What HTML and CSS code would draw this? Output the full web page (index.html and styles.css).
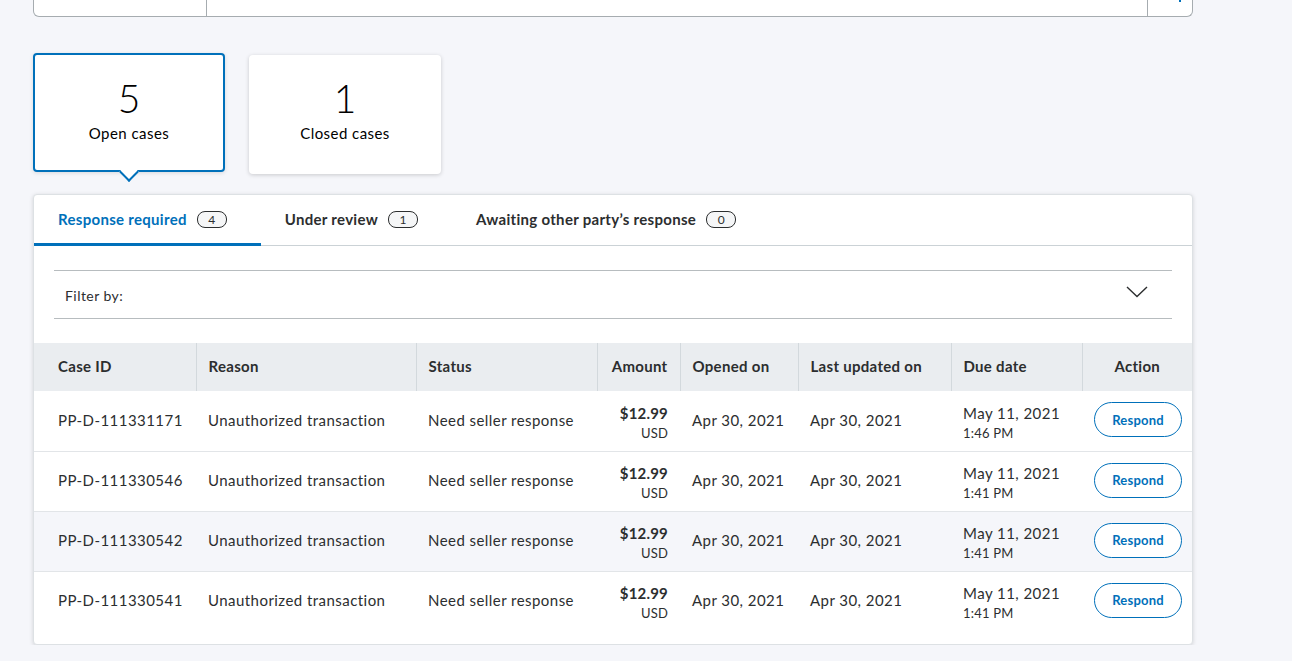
FILE: index.html
```html
<!DOCTYPE html>
<html>
<head>
<meta charset="utf-8">
<link rel="stylesheet" href="styles.css">
</head>
<body>
<div class="page">
  <div class="searchbar">
    <div class="sb-left"></div>
    <div class="sb-mid"></div>
    <div class="sb-right"><span class="sb-icon"></span></div>
  </div>

  <div class="cards">
    <div class="card active">
      <div class="card-num">5</div>
      <div class="card-label">Open cases</div>
      <span class="caret"></span>
    </div>
    <div class="card">
      <div class="card-num">1</div>
      <div class="card-label">Closed cases</div>
    </div>
  </div>

  <div class="panel">
    <div class="tabs">
      <div class="tab active">Response required <span class="badge">4</span></div>
      <div class="tab">Under review <span class="badge">1</span></div>
      <div class="tab">Awaiting other party’s response <span class="badge">0</span></div>
    </div>

    <div class="filter-wrap">
      <div class="filter">
        <span>Filter by:</span>
        <svg class="chev" width="22" height="12" viewBox="0 0 22 12"><path d="M1 1 L11 10.5 L21 1" fill="none" stroke="#2c2e2f" stroke-width="1.4"/></svg>
      </div>
    </div>

    <table class="cases">
      <colgroup>
        <col class="c1"><col class="c2"><col class="c3"><col class="c4"><col class="c5"><col class="c6"><col class="c7"><col class="c8">
      </colgroup>
      <thead>
        <tr>
          <th class="first">Case ID</th>
          <th>Reason</th>
          <th>Status</th>
          <th class="right">Amount</th>
          <th>Opened on</th>
          <th>Last updated on</th>
          <th>Due date</th>
          <th class="center">Action</th>
        </tr>
      </thead>
      <tbody>
        <tr>
          <td class="first">PP-D-111331171</td>
          <td>Unauthorized transaction</td>
          <td>Need seller response</td>
          <td class="right stack"><div class="amt">$12.99</div><div class="small">USD</div></td>
          <td>Apr 30, 2021</td>
          <td>Apr 30, 2021</td>
          <td class="stack"><div>May 11, 2021</div><div class="small">1:46 PM</div></td>
          <td class="center"><button class="respond">Respond</button></td>
        </tr>
        <tr>
          <td class="first">PP-D-111330546</td>
          <td>Unauthorized transaction</td>
          <td>Need seller response</td>
          <td class="right stack"><div class="amt">$12.99</div><div class="small">USD</div></td>
          <td>Apr 30, 2021</td>
          <td>Apr 30, 2021</td>
          <td class="stack"><div>May 11, 2021</div><div class="small">1:41 PM</div></td>
          <td class="center"><button class="respond">Respond</button></td>
        </tr>
        <tr class="alt">
          <td class="first">PP-D-111330542</td>
          <td>Unauthorized transaction</td>
          <td>Need seller response</td>
          <td class="right stack"><div class="amt">$12.99</div><div class="small">USD</div></td>
          <td>Apr 30, 2021</td>
          <td>Apr 30, 2021</td>
          <td class="stack"><div>May 11, 2021</div><div class="small">1:41 PM</div></td>
          <td class="center"><button class="respond">Respond</button></td>
        </tr>
        <tr>
          <td class="first">PP-D-111330541</td>
          <td>Unauthorized transaction</td>
          <td>Need seller response</td>
          <td class="right stack"><div class="amt">$12.99</div><div class="small">USD</div></td>
          <td>Apr 30, 2021</td>
          <td>Apr 30, 2021</td>
          <td class="stack"><div>May 11, 2021</div><div class="small">1:41 PM</div></td>
          <td class="center"><button class="respond">Respond</button></td>
        </tr>
      </tbody>
    </table>
  </div>
</div>
</body>
</html>
```

FILE: styles.css
```css
* { box-sizing: border-box; }
html, body { margin: 0; padding: 0; }
body {
  background: #f5f6fa;
  font-family: Lato, "Liberation Sans", Arial, sans-serif;
  color: #2c2e2f;
  font-size: 15px;
  letter-spacing: 0.45px;
}
.page {
  width: 1160px;
  margin-left: 33px;
}
.searchbar {
  height: 17px;
  display: flex;
  background: #fff;
  border: 1px solid #a6acb0;
  border-top: none;
  border-radius: 0 0 6px 6px;
}
.sb-left { width: 173px; border-right: 1px solid #a6acb0; }
.sb-mid { flex: 1; border-right: 1px solid #a6acb0; }
.sb-right { width: 44px; position: relative; }
.sb-icon {
  position: absolute; left: 31px; top: 0;
  width: 2px; height: 2px; background: #0070ba;
}
.cards {
  display: flex;
  align-items: flex-start;
  gap: 24px;
  margin-top: 36px;
}
.card {
  width: 192px;
  height: 119px;
  background: #fff;
  border-radius: 4px;
  box-shadow: 0 1px 4px rgba(0,0,0,0.18);
  display: flex;
  flex-direction: column;
  align-items: center;
  position: relative;
  margin-top: 2px;
  padding-top: 21px;
}
.card.active {
  margin-top: 0;
  border: 2px solid #0070ba;
  padding-top: 21px;
  box-shadow: 0 1px 4px rgba(0,0,0,0.12);
}
.card-num {
  font-size: 39px;
  font-weight: 300;
  line-height: 44px;
  color: #000;
  letter-spacing: 0;
}
.card-label {
  font-size: 15px;
  line-height: 20px;
  margin-top: 3px;
  color: #000;
}
.caret {
  position: absolute;
  left: 87px;
  bottom: -9px;
  width: 14px;
  height: 14px;
  background: #fff;
  border-right: 2px solid #0070ba;
  border-bottom: 2px solid #0070ba;
  transform: rotate(45deg);
}
.panel {
  margin-top: 20px;
  background: #fff;
  border: 1px solid #dde1e4;
  border-radius: 4px;
  box-shadow: 0 1px 4px rgba(0,0,0,0.15);
  padding-bottom: 13px;
}
.tabs {
  display: flex;
  height: 51px;
  border-bottom: 1px solid #cbd2d6;
}
.tab {
  padding: 0 34px 0 24px;
  display: flex;
  align-items: center;
  font-weight: 700;
  font-size: 15px;
  color: #2c2e2f;
  border-bottom: 3px solid transparent;
  margin-bottom: -1px;
  letter-spacing: 0.3px;
}
.tab.active { color: #0070ba; border-bottom-color: #0070ba; }
.badge {
  display: inline-flex;
  align-items: center;
  justify-content: center;
  min-width: 30px;
  height: 17px;
  margin-left: 10px;
  border: 1px solid #2c2e2f;
  border-radius: 8px;
  font-size: 12px;
  font-weight: 400;
  color: #2c2e2f;
  background: #f5f6f7;
  letter-spacing: 0;
}
.filter-wrap { padding: 24px 20px 24px; }
.filter {
  height: 49px;
  border-top: 1px solid #b7bcbf;
  border-bottom: 1px solid #b7bcbf;
  display: flex;
  align-items: center;
  justify-content: space-between;
  padding: 2px 24px 0 11px;
  font-size: 14px;
}
.chev { margin-top: -8px; }
table.cases {
  width: 100%;
  border-collapse: collapse;
  table-layout: fixed;
}
col.c1 { width: 162px; }
col.c2 { width: 220px; }
col.c3 { width: 181px; }
col.c4 { width: 83px; }
col.c5 { width: 118px; }
col.c6 { width: 153px; }
col.c7 { width: 131px; }
col.c8 { width: 110px; }
thead tr { background: #eaedf0; height: 48px; }
th {
  text-align: left;
  font-weight: 700;
  font-size: 15px;
  padding: 0 12px 2px;
  border-left: 1px solid #d3d9dd;
  white-space: nowrap;
  letter-spacing: 0.3px;
}
th.first, td.first { padding-left: 24px; border-left: none; }
td {
  padding: 0 12px 2px;
  font-size: 15px;
  height: 60px;
  white-space: nowrap;
  border-bottom: 1px solid #e2e5e8;
  line-height: 20px;
}
td.stack { padding-top: 4px; padding-bottom: 0; }
tbody tr:last-child td { border-bottom: none; }
tr.alt td { background: #f5f6fa; }
.right { text-align: right; }
.center { text-align: center; }
.amt { font-weight: 700; letter-spacing: 0.2px; }
.small { font-size: 13px; line-height: 20px; letter-spacing: 0.2px; }
.respond {
  font-family: inherit;
  width: 88px;
  height: 35px;
  border: 1px solid #0070ba;
  border-radius: 18px;
  background: #fff;
  color: #0070ba;
  font-weight: 700;
  font-size: 13px;
  letter-spacing: 0.2px;
  cursor: pointer;
}
```
